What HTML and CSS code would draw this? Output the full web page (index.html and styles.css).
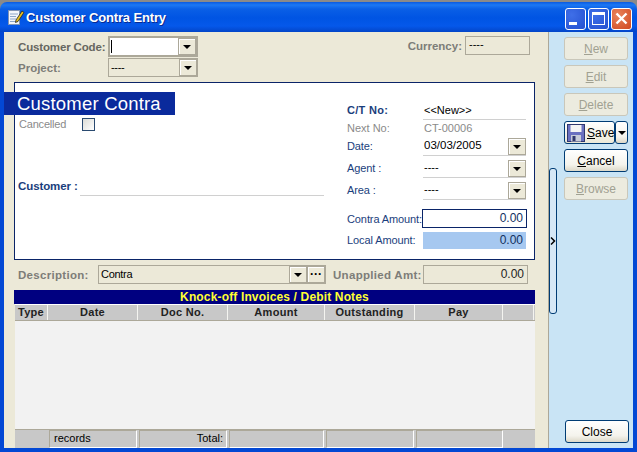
FILE: index.html
```html
<!DOCTYPE html>
<html lang="en">
<head>
<meta charset="utf-8">
<title>Customer Contra Entry</title>
<link rel="stylesheet" href="styles.css">
</head>
<body>
<div class="window">
  <div class="titlebar">
    <svg class="appicon" width="18" height="18" viewBox="0 0 18 18"><rect x="1.5" y="2.5" width="11" height="14" fill="#f4f6fb" stroke="#7f93b5"/><path d="M3 6h8M3 8.5h6M3 11h6M3 13.5h8" stroke="#8ea6c8"/><path d="M9 12l6-9 2 1.5-6 9-2.5 1z" fill="#e8c020" stroke="#222" stroke-width=".8"/></svg>
    <span class="title">Customer Contra Entry</span>
    <div class="winbtns">
      <span class="wb"><svg width="19" height="20" viewBox="0 0 19 20"><rect x="3" y="13" width="8" height="3" fill="#fff"/></svg></span>
      <span class="wb"><svg width="19" height="20" viewBox="0 0 19 20"><rect x="3.5" y="3.5" width="12" height="12" fill="none" stroke="#fff"/><rect x="3" y="3" width="13" height="3" fill="#fff"/></svg></span>
      <span class="wb close"><svg width="19" height="20" viewBox="0 0 19 20"><path d="M4.5 4.5l10 10M14.5 4.5l-10 10" stroke="#fff" stroke-width="2.4"/></svg></span>
    </div>
  </div>
  <div class="client">
    <div class="main">
      <div class="head">
        <div class="headcol">
          <div class="headrow">
            <label class="blabel code">Customer Code:</label>
            <div class="combo focus"><span class="caret"></span><span class="dd"><i></i></span></div>
          </div>
          <div class="headrow">
            <label class="blabel proj">Project:</label>
            <div class="combo flat"><span class="val">----</span><span class="dd"><i></i></span></div>
          </div>
        </div>
        <div class="currency">
          <label class="blabel">Currency:</label>
          <div class="box curbox">----</div>
        </div>
      </div>

      <div class="card">
        <div class="cardleft">
          <div class="band">Customer Contra</div>
          <div class="cancelled"><span>Cancelled</span><span class="check"></span></div>
          <div class="customer"><span class="navyb">Customer :</span><span class="custline"></span></div>
        </div>
        <div class="cardright">
          <div class="frow r-ct"><span class="navyb flabel">C/T No:</span><span class="fval lined">&lt;&lt;New&gt;&gt;</span></div>
          <div class="frow r-next"><span class="grey flabel">Next No:</span><span class="fval grey">CT-00006</span></div>
          <div class="frow r-dd r-date"><span class="navy flabel">Date:</span><span class="fval lined"><span class="dateval">03/03/2005</span><span class="dd"><i></i></span></span></div>
          <div class="frow r-dd"><span class="navy flabel">Agent :</span><span class="fval lined"><span class="ddval">----</span><span class="dd"><i></i></span></span></div>
          <div class="frow r-dd"><span class="navy flabel">Area :</span><span class="fval lined"><span class="ddval">----</span><span class="dd"><i></i></span></span></div>
          <div class="frow r-amt"><span class="navy flabel">Contra Amount:</span><span class="amount edit">0.00</span></div>
          <div class="frow r-local"><span class="navy flabel">Local Amount:</span><span class="amount local">0.00</span></div>
        </div>
      </div>

      <div class="descrow">
        <label class="blabel dlabel">Description:</label>
        <div class="desc"><span class="val">Contra</span><span class="dd"><i></i></span><span class="dd dots">···</span></div>
        <label class="blabel ulabel">Unapplied Amt:</label>
        <div class="box unapplied">0.00</div>
      </div>

      <div class="grid">
        <div class="gridtitle">Knock-off Invoices / Debit Notes</div>
        <div class="ghead">
          <span class="c1">Type</span><span class="c2">Date</span><span class="c3">Doc No.</span><span class="c4">Amount</span><span class="c5">Outstanding</span><span class="c6">Pay</span><span class="c7"></span>
        </div>
        <div class="gbody"></div>
        <div class="gfoot">
          <span class="f0"></span><span class="fc f1">records</span><span class="fc f2">Total:</span><span class="fc f3"></span><span class="fc f4"></span><span class="fc f5"></span>
        </div>
      </div>
    </div>

    <div class="side">
      <button class="btn off"><u>N</u>ew</button>
      <button class="btn off"><u>E</u>dit</button>
      <button class="btn off"><u>D</u>elete</button>
      <div class="saverow">
        <button class="btn save">
          <svg width="18" height="18" viewBox="0 0 18 18"><rect x=".5" y=".5" width="17" height="17" fill="#6a70c0" stroke="#30386e"/><rect x="3.5" y="1" width="11" height="7" fill="#f4f4f4"/><rect x="4" y="11" width="10" height="6.5" fill="#c8ccd8"/><rect x="5.5" y="12" width="3" height="5" fill="#30386e"/></svg>
          <span><u>S</u>ave</span>
        </button>
        <button class="btn drop"><i></i></button>
      </div>
      <button class="btn"><u>C</u>ancel</button>
      <button class="btn off"><u>B</u>rowse</button>
      <button class="btn closebtn">Close</button>
    </div>
    <div class="handle"><svg width="6" height="8" viewBox="0 0 6 8"><path d="M1 0.5l3.5 3.5-3.5 3.5" fill="none" stroke="#000" stroke-width="1.5"/></svg></div>
  </div>
</div>
</body>
</html>
```
FILE: styles.css
```css
* { box-sizing: border-box; }
html, body { margin: 0; padding: 0; }
body { width: 637px; height: 452px; background: #8a8a8a; overflow: hidden; font: 12px "Liberation Sans", Arial, sans-serif; color: #000; }
.window { width: 637px; height: 452px; padding-top: 2px; display: flex; flex-direction: column; }
.titlebar {
  height: 30px; flex: none; display: flex; align-items: center; padding: 0 5px 0 7px; border-radius: 7px 7px 0 0;
  background: linear-gradient(#0a5ae0 0, #1c78f4 3px, #0a5fe6 7px, #0054e3 16px, #0558ea 24px, #0345c8 30px);
}
.appicon { flex: none; margin-right: 1px; }
.title { color: #fff; font-weight: bold; font-size: 13px; letter-spacing: -.15px; text-shadow: 1px 1px 0 #0a2a90; }
.winbtns { margin-left: auto; display: flex; gap: 2px; padding-top: 3px; }
.wb { width: 21px; height: 22px; border: 1px solid #fff; border-radius: 3px; background: radial-gradient(circle at 30% 30%, #3f6fe8, #2450d0); display: block; }
.wb svg { display: block; }
.close { background: radial-gradient(circle at 30% 30%, #e8845c, #d04820); }

.client { flex: 1; display: flex; position: relative; background: #ece9d8; border: solid #0348d4; border-width: 0 4px 4px; min-height: 0; }
.main { width: 545px; flex: none; padding: 4px 13px 0 10px; border-right: 1px solid #aca899; }
.blabel { font-weight: bold; font-size: 11.5px; color: #7d7d78; white-space: nowrap; }

.head { height: 46px; display: flex; justify-content: space-between; }
.headcol { display: flex; flex-direction: column; }
.headrow { display: flex; align-items: center; height: 21px; }
.code { width: 90px; margin-left: 4px; color: #666660; letter-spacing: -.15px; }
.proj { width: 90px; margin-left: 4px; }
.combo { width: 90px; display: flex; align-items: center; justify-content: space-between; font-size: 11px; }
.focus { height: 21px; border: 2px solid #aca899; background: #fff; padding-left: 1px; }
.flat { height: 19px; border: 1px solid #aca899; }
.caret { width: 1px; height: 13px; background: #000; }
.val { padding: 0 0 1px 2px; font-size: 11px; letter-spacing: -.3px; }
.dd { width: 18px; height: 17px; background: #ece9d8; border: 1px solid #aca899; box-shadow: inset 1px 1px 0 #fff; display: flex; align-items: center; justify-content: center; flex: none; }
.dd i, .drop i { width: 0; height: 0; border: 4px solid transparent; border-top: 4px solid #000; border-bottom: 0; display: block; }
.currency { display: flex; align-items: center; gap: 3px; height: 19px; padding-right: 5px; }
.box { border: 1px solid #aca899; font-size: 11px; padding: 0 3px; }
.curbox { width: 65px; height: 19px; line-height: 15px; }

.card { height: 178px; background: #fff; border: 1px solid #0a2468; display: flex; justify-content: space-between; }
.cardleft { width: 310px; padding-top: 9px; }
.band { margin-left: -11px; width: 171px; height: 23px; background: #0a2a9c; color: #fff; font-size: 18.5px; line-height: 23px; padding-left: 13px; letter-spacing: .2px; }
.cancelled { display: flex; align-items: center; height: 15px; margin: 2px 0 0 4px; color: #8a8a8a; font-size: 11px; letter-spacing: -.2px; }
.cancelled span:first-child { width: 63px; padding-bottom: 2px; }
.check { width: 13px; height: 13px; border: 1px solid #2a4a70; background: linear-gradient(135deg, #dcdcd6, #fff); }
.customer { display: flex; align-items: flex-end; margin: 48px 0 0 3px; height: 16px; }
.navyb { font-weight: bold; color: #1a3e7c; white-space: nowrap; letter-spacing: .3px; }
.customer .navyb { width: 62px; padding-bottom: 4px; font-size: 11.5px; letter-spacing: -.1px; }
.custline { flex: 1; border-bottom: 1px solid #d0d0d0; height: 13px; margin-right: 1px; }
.cardright { width: 187px; padding-top: 19px; }
.frow { display: flex; align-items: center; font-size: 11px; }
.flabel { width: 76px; white-space: nowrap; flex: none; padding-bottom: 2px; }
.r-dd:nth-child(n+4) .flabel { padding-bottom: 3px; }
.r-amt .flabel { padding-bottom: 0; }
.navy { color: #1a3e7c; letter-spacing: -.1px; }
.grey { color: #8a8a8a; }
.fval { width: 103px; font-size: 11px; display: flex; align-items: center; justify-content: space-between; padding: 0 0 2px 1px; }
.lined { border-bottom: 1px solid #d0d0d0; }
.r-ct, .r-next { height: 18px; }
.r-ct .fval, .r-next .fval { height: 18px; }
.r-dd { height: 18px; margin-bottom: 4px; }
.r-dd .fval { height: 18px; padding-bottom: 0; }
.r-dd .dd { height: 17px; }
.dateval { font-size: 11.5px; padding-bottom: 3px; }
.ddval { padding-bottom: 3px; }
.r-dd + .r-amt { margin-top: 9px; }
.amount { width: 105px; height: 19px; line-height: 17px; text-align: right; padding-right: 3px; color: #12305f; font-size: 12px; letter-spacing: 0; }
.edit { border: 1px solid #0a2468; margin-left: -1px; }
.r-amt { height: 19px; }
.r-local { margin-top: 4px; height: 17px; }
.local { width: 103px; height: 17px; line-height: 17px; background: #a6c8f0; }

.descrow { height: 30px; padding-bottom: 1px; display: flex; align-items: center; }
.dlabel { width: 80px; margin-left: 4px; letter-spacing: .3px; }
.desc { width: 228px; height: 19px; display: flex; align-items: center; border: 1px solid #aca899; }
.desc .val { flex: 1; }
.dots { line-height: 15px; font-weight: bold; font-size: 12px; }
.ulabel { margin-left: 7px; width: 90px; letter-spacing: .3px; }
.unapplied { width: 105px; height: 19px; line-height: 17px; text-align: right; font-size: 12px; color: #222; }

.grid { width: 521px; }
.gridtitle { height: 14px; background: #000080; color: #ffff33; font-weight: bold; font-size: 12px; line-height: 14px; text-align: center; letter-spacing: .15px; }
.ghead { height: 17px; display: flex; margin-left: 1px; border-top: 1px solid #fff; border-bottom: 1px solid #aca899; background: #c8c8c8; font-weight: bold; font-size: 11px; letter-spacing: .3px; color: #222; }
.ghead span { border-right: 1px solid #f4f4f0; text-align: center; line-height: 15px; }
.c1 { width: 33px; } .c2 { width: 90px; } .c3 { width: 90px; } .c4 { width: 97px; } .c5 { width: 90px; } .c6 { width: 88px; } .c7 { width: 31px; }
.gbody { height: 109px; margin-left: 1px; background: #f2f2f2; border-bottom: 1px solid #aca899; }
.gfoot { height: 18px; margin-left: 1px; display: flex; background: #c8c8c8; gap: 2px; font-size: 11px; }
.f0 { width: 34px; margin-right: -2px; }
.fc { border: solid; border-color: #aca899 #fff #fff #aca899; border-width: 1px; line-height: 15px; padding: 0 4px; }
.f1 { width: 88px; } .f2 { width: 88px; text-align: right; padding-right: 3px; } .f3 { width: 95px; } .f4 { width: 88px; } .f5 { width: 87px; }

.side { flex: 1; background: #c9e4f5; padding: 5px 4px 5px 15px; display: flex; flex-direction: column; gap: 5px; }
.btn { width: 64px; height: 23px; flex: none; font: 12px "Liberation Sans", Arial, sans-serif; color: #000; border: 1px solid #003c74; border-radius: 3px; background: linear-gradient(#fff, #f4f3ec 70%, #dcd8c8); padding: 0; }
.off { border-color: #c9c7ba; background: #ecebdf; color: #a1a192; }
.saverow { display: flex; width: 64px; }
.save { width: 51px; display: flex; align-items: center; gap: 2px; padding-left: 2px; background: linear-gradient(#fff, #ece9d8); }
.save svg { flex: none; }
.drop { width: 13px; display: flex; align-items: center; justify-content: center; }
.closebtn { margin-top: auto; margin-left: 1px; }

.handle { position: absolute; left: 545px; top: 136px; width: 8px; height: 146px; border: 1px solid #003c74; border-radius: 3px; background: #d6e8f6; display: flex; align-items: center; }
```
